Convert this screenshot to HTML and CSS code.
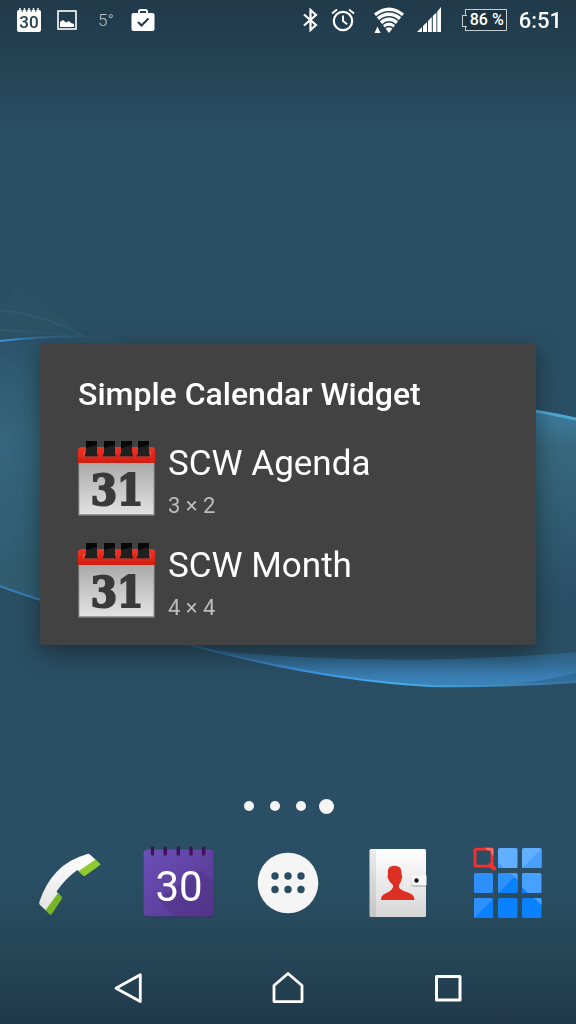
FILE: index.html
```html
<!DOCTYPE html>
<html lang="en">
<head>
    <meta charset="UTF-8">
    <meta name="viewport" content="width=device-width, initial-scale=1.0">
    <title>Simple Calendar Widget</title>
    <link rel="stylesheet" href="styles.css">
</head>
<body>

    <!-- Wallpaper -->
    <svg class="wallpaper" viewBox="0 0 576 1024" preserveAspectRatio="none" aria-hidden="true">
        <defs>
            <linearGradient id="sky" x1="0" y1="0" x2="0" y2="1">
                <stop offset="0" stop-color="#203a4a"/>
                <stop offset="0.04" stop-color="#233f50"/>
                <stop offset="0.13" stop-color="#2a4e63"/>
                <stop offset="0.85" stop-color="#2a4f64"/>
                <stop offset="0.93" stop-color="#264658"/>
                <stop offset="1" stop-color="#1f394a"/>
            </linearGradient>
            <linearGradient id="leftWave" x1="0" y1="0" x2="0" y2="1">
                <stop offset="0" stop-color="#2b5268"/>
                <stop offset="0.15" stop-color="#305d72"/>
                <stop offset="0.35" stop-color="#35657c"/>
                <stop offset="0.65" stop-color="#315f74"/>
                <stop offset="0.8" stop-color="#2f5b6d"/>
                <stop offset="1" stop-color="#2f668e"/>
            </linearGradient>
            <linearGradient id="rightWave" x1="0" y1="0" x2="0" y2="1">
                <stop offset="0" stop-color="#3d83a8"/>
                <stop offset="0.1" stop-color="#3b7896"/>
                <stop offset="0.2" stop-color="#38697e"/>
                <stop offset="0.45" stop-color="#315e73"/>
                <stop offset="0.8" stop-color="#2a4f66"/>
                <stop offset="1" stop-color="#2a4f64"/>
            </linearGradient>
            <linearGradient id="crescent" x1="0" y1="0" x2="0" y2="1">
                <stop offset="0" stop-color="#2b5878"/>
                <stop offset="0.4" stop-color="#31698f"/>
                <stop offset="0.8" stop-color="#3a7fb6"/>
                <stop offset="1" stop-color="#3b83ba"/>
            </linearGradient>
            <linearGradient id="edge" x1="0" y1="0" x2="1" y2="0">
                <stop offset="0" stop-color="#35719e" stop-opacity="0.5"/>
                <stop offset="0.3" stop-color="#3f93e5"/>
                <stop offset="0.55" stop-color="#46b1e8"/>
                <stop offset="0.75" stop-color="#3f90c4"/>
                <stop offset="1" stop-color="#3a75a0"/>
            </linearGradient>
            <linearGradient id="fade" x1="0" y1="0" x2="1" y2="0">
                <stop offset="0" stop-color="#4293dd"/>
                <stop offset="0.3" stop-color="#336e96"/>
                <stop offset="1" stop-color="#2a4f64" stop-opacity="0"/>
            </linearGradient>
        </defs>
        <rect width="576" height="1024" fill="url(#sky)"/>
        <path d="M16 286Q50 305 92 342L0 342V310Z" fill="#2e5768" opacity="0.4"/>
        <path d="M0 310Q50 315 92 341" fill="none" stroke="#356681" opacity="0.7"/>
        <path d="M0 330Q60 333 110 340" fill="none" stroke="#30607b" opacity="0.5" stroke-width="2"/>
        <path d="M0 341Q60 333 120 337L240 640Q110 628 0 585Z" fill="url(#leftWave)"/>
        <path d="M0 355Q22 372 40 398" fill="none" stroke="#3b6d82" opacity="0.5"/>
        <path d="M0 341Q50 335 120 337" fill="none" stroke="url(#fade)" stroke-width="2"/>
        <path d="M0 586Q20 594 60 606" fill="none" stroke="#3a7fb5" stroke-width="2"/>
        <path d="M400 395Q490 401 576 419V650H400Z" fill="url(#rightWave)"/>
        <path d="M500 406Q540 411 576 419" fill="none" stroke="#4fa7d6" stroke-width="3"/>
        <path d="M190 645Q222 653 300 657Q400 662 480 658Q530 656 576 652V682Q500 687 430 686Q320 680 190 645Z" fill="url(#crescent)"/>
        <path d="M515 684Q550 680 576 673V682Z" fill="#2d628b" opacity="0.6"/>
        <path d="M190 645Q320 680 430 686Q500 687 576 682" fill="none" stroke="url(#edge)" stroke-width="2"/>
    </svg>

    <!-- Status bar -->
    <header class="status-bar">
        <div class="notifications">
            <svg width="26" height="26" viewBox="0 0 26 26">
                <path d="M3 3h20a2 2 0 0 1 2 2v18a2 2 0 0 1-2 2H3a2 2 0 0 1-2-2V5a2 2 0 0 1 2-2z" fill="#fff"/>
                <path d="M4 1v3M8.500 1v3M13 1v3M17.500 1v3M22 1v3" stroke="#fff" stroke-width="1.500"/>
                <path d="M6.200 3v2M10.700 3v2M15.200 3v2M19.700 3v2" stroke="#24404f" stroke-width="1"/>
                <text class="mini-day" x="13" y="21" text-anchor="middle">30</text>
            </svg>
            <svg width="20" height="20" viewBox="0 0 20 20">
                <rect x="1" y="1" width="18" height="18" fill="none" stroke="#fff" stroke-width="1.600"/>
                <path d="M3 17v-5l3-2 3 2.500 3-1.500 2 2 3 1v3z" fill="#fff"/>
            </svg>
            <span class="temperature">5°</span>
            <svg width="24" height="24" viewBox="0 0 24 24">
                <path d="M8 6V3.500Q8 2 9.500 2h5Q16 2 16 3.500V6" fill="none" stroke="#fff" stroke-width="2"/>
                <rect x="0.500" y="5" width="23" height="18" rx="2" fill="#fff"/>
                <path d="M7 14l3.500 3.500 7-7" fill="none" stroke="#24404f" stroke-width="2.200"/>
            </svg>
        </div>
        <div class="system">
            <svg width="16" height="24" viewBox="0 0 16 24">
                <path d="M1 6.500L13 17 7.500 22V2l5.500 5L1 17.500" fill="none" stroke="#fff" stroke-width="2.200"/>
            </svg>
            <svg width="24" height="24" viewBox="0 0 24 24">
                <circle cx="12" cy="13" r="9.200" fill="none" stroke="#fff" stroke-width="2.200"/>
                <path d="M12 7.500V13l4.200 3.200M1 5.500l5-4M23 5.500l-5-4" fill="none" stroke="#fff" stroke-width="1.900"/>
            </svg>
            <svg class="wifi" width="32" height="28" viewBox="0 0 32 28">
                <path d="M1 7.500Q16-4.500 31 7.500L16 27z" fill="#fff"/>
                <g fill="none" stroke="#233f50" stroke-width="1.500">
                    <path d="M3 11Q16 0.500 29 11"/>
                    <path d="M6 15Q16 6.500 26 15"/>
                    <path d="M9 19Q16 12.500 23 19"/>
                    <path d="M11.500 22.500Q16 18.500 20.500 22.500"/>
                </g>
                <path d="M1.500 27L4.500 20.500 7.500 27z" fill="#fff"/>
            </svg>
            <svg width="24" height="26" viewBox="0 0 24 26">
                <path d="M0 25L5 20V25zM6 25V19L10 15V25zM11 25V14L14.800 10V25zM15.800 25V9L19.400 5.500V25zM20.300 25V4.500L24 0V25z" fill="#fff"/>
            </svg>
            <span class="battery">86 %</span>
            <time class="clock">6:51</time>
        </div>
    </header>

    <!-- Widget picker -->
    <main class="home">
        <section class="dialog" role="dialog" aria-labelledby="dialog-title">
            <h1 class="dialog-title" id="dialog-title">Simple Calendar Widget</h1>
            <ul class="widget-list">
                <li>
                    <button class="widget" type="button">
                        <svg width="78" height="76" viewBox="0 0 78 76">
                            <defs>
                                <linearGradient id="paper" x1="0" y1="0" x2="0" y2="1">
                                    <stop offset="0" stop-color="#aaa"/>
                                    <stop offset="1" stop-color="#e2e2e2"/>
                                </linearGradient>
                                <linearGradient id="red" x1="0" y1="0" x2="0" y2="1">
                                    <stop offset="0" stop-color="#f03325"/>
                                    <stop offset="1" stop-color="#cf1d10"/>
                                </linearGradient>
                            </defs>
                            <rect x="0.500" y="22" width="76" height="53.500" fill="#999"/>
                            <rect x="1.500" y="23" width="74" height="51" fill="url(#paper)"/>
                            <path d="M3 7H75L77 9V23H0V9Z" fill="url(#red)"/>
                            <path d="M5 17V12h15v5h5v-5h13v5h4v-5h12v5h5v-5h14v5H5z" fill="#f0493c"/>
                            <path d="M8 1h11v11l1 4.500H6L8 12zM26 1h11v11l1 4.500H24.500L26 12zM43 1h11v11l1 4.500H41.500L43 12zM60 1h11v11l1 4.500H58.500L60 12z" fill="#202020"/>
                            <path d="M8 1h11v4L8 8zM26 1h11v4l-11 3zM43 1h11v4L43 8zM60 1h11v4l-11 3z" fill="#080808"/>
                            <text class="widget-day" x="39" y="65" text-anchor="middle">31</text>
                        </svg>
                        <span class="widget-text">
                            <span class="widget-name">SCW Agenda</span>
                            <span class="widget-size">3 × 2</span>
                        </span>
                    </button>
                </li>
                <li>
                    <button class="widget" type="button">
                        <svg width="78" height="76" viewBox="0 0 78 76">
                            <rect x="0.500" y="22" width="76" height="53.500" fill="#999"/>
                            <rect x="1.500" y="23" width="74" height="51" fill="url(#paper)"/>
                            <path d="M3 7H75L77 9V23H0V9Z" fill="url(#red)"/>
                            <path d="M5 17V12h15v5h5v-5h13v5h4v-5h12v5h5v-5h14v5H5z" fill="#f0493c"/>
                            <path d="M8 1h11v11l1 4.500H6L8 12zM26 1h11v11l1 4.500H24.500L26 12zM43 1h11v11l1 4.500H41.500L43 12zM60 1h11v11l1 4.500H58.500L60 12z" fill="#202020"/>
                            <path d="M8 1h11v4L8 8zM26 1h11v4l-11 3zM43 1h11v4L43 8zM60 1h11v4l-11 3z" fill="#080808"/>
                            <text class="widget-day" x="39" y="65" text-anchor="middle">31</text>
                        </svg>
                        <span class="widget-text">
                            <span class="widget-name">SCW Month</span>
                            <span class="widget-size">4 × 4</span>
                        </span>
                    </button>
                </li>
            </ul>
        </section>
    </main>

    <div class="pages">
        <span class="page"></span>
        <span class="page"></span>
        <span class="page"></span>
        <span class="page current"></span>
    </div>

    <!-- Dock -->
    <div class="dock">
        <button class="app" type="button" aria-label="Phone">
            <svg width="72" height="72" viewBox="0 0 72 72">
                <defs>
                    <linearGradient id="handset" x1="0" y1="0" x2="0" y2="1">
                        <stop offset="0" stop-color="#fff"/>
                        <stop offset="1" stop-color="#e2e2e2"/>
                    </linearGradient>
                </defs>
                <path d="M52 8.500Q54.300 7 56 8.500L62.500 14.500 46 26 43.300 24Q31 33 22.500 45.500L25.500 49 12.500 65 6 59Q5 58 5.300 56Q18 18 52 8.500Z" fill="url(#handset)"/>
                <path d="M61.500 13.500l4.500 4q.8 1-.5 2L51.500 29.500q-1.500 1-2.500 0L44.300 25.300z" fill="#8fca2e"/>
                <path d="M24 47l3.500 3.500q1 1 .2 2.400L18 67.800q-1.200 1.800-2.600.4L11.500 64.200z" fill="#78b428"/>
            </svg>
        </button>
        <button class="app" type="button" aria-label="Calendar">
            <svg width="72" height="72" viewBox="0 0 72 72">
                <defs>
                    <linearGradient id="violet" x1="0" y1="0" x2="1" y2="1">
                        <stop offset="0" stop-color="#6b50b8"/>
                        <stop offset="1" stop-color="#54368c"/>
                    </linearGradient>
                </defs>
                <rect x="0.500" y="5" width="70" height="66.500" rx="4" fill="#1f3b4b"/>
                <rect x="0.500" y="3.500" width="70" height="67" rx="4" fill="url(#violet)"/>
                <path d="M15 53l17 17.500h36.500q2 0 2-2V36L58 25z" fill="#4f3285" opacity="0.5"/>
                <path d="M9.500 2v6M22.300 2v6M35.300 2v6M48 2v6M60.700 2v6" stroke="#3d1458" stroke-width="3.400" stroke-linecap="round"/>
                <text class="dock-day" x="36" y="55" text-anchor="middle">30</text>
            </svg>
        </button>
        <button class="app" type="button" aria-label="All apps">
            <svg width="72" height="72" viewBox="0 0 72 72">
                <circle cx="36" cy="37" r="30.300" fill="#f5f5f5"/>
                <g fill="#294c60">
                    <circle cx="23" cy="30" r="3.700"/>
                    <circle cx="36" cy="30" r="3.700"/>
                    <circle cx="49" cy="30" r="3.700"/>
                    <circle cx="23" cy="43.500" r="3.700"/>
                    <circle cx="36" cy="43.500" r="3.700"/>
                    <circle cx="49" cy="43.500" r="3.700"/>
                </g>
            </svg>
        </button>
        <button class="app" type="button" aria-label="Contacts">
            <svg width="72" height="72" viewBox="0 0 72 72">
                <defs>
                    <linearGradient id="book" x1="0" y1="0" x2="0" y2="1">
                        <stop offset="0" stop-color="#fff"/>
                        <stop offset="1" stop-color="#d6d6d6"/>
                    </linearGradient>
                </defs>
                <rect x="8.500" y="3" width="56.500" height="68" rx="1.500" fill="url(#book)"/>
                <path d="M10 3h5v68h-5q-1.500 0-1.500-1.500v-65Q8.500 3 10 3z" fill="#000" opacity="0.080"/>
                <path d="M33.500 19.700c5.500 0 7.500 3.600 7 8l.8 3.300-1.300 4.500-2 3.500v2.500c3 3.500 7.500 4.200 11 6 3.500 1.600 4.400 3.500 4.400 6.500H20c0-3 1-4.900 4.400-6.500 3.200-1.500 5.700-2.500 7.600-6V39l-3.500-3.500-2-4.500.5-3.300c-.7-4.400 1-8 6.500-8z" fill="#de2f24"/>
                <path d="M65 30.500H53q-2.500 0-2.500 2.500v5q0 2.500 2.500 2.500h12z" fill="#999"/>
                <path d="M65.500 29.500H53q-2.500 0-2.500 2.500v5q0 2.500 2.500 2.500h12.500z" fill="#f8f8f8"/>
                <circle cx="55.500" cy="34.500" r="2.200" fill="#111"/>
            </svg>
        </button>
        <button class="app" type="button" aria-label="Widgets">
            <svg width="72" height="72" viewBox="0 0 72 72">
                <g fill="#2e90ff">
                    <rect x="28" y="2" width="19.500" height="20" rx="1.500" fill="#62aeff"/>
                    <rect x="52" y="2" width="19.500" height="20" rx="1.500" fill="#62aeff"/>
                    <rect x="4" y="27" width="19" height="20" rx="1.500"/>
                    <rect x="28" y="27" width="19.500" height="20" rx="1.500"/>
                    <rect x="52" y="27" width="19.500" height="20" rx="1.500" fill="#48a0ff"/>
                    <rect x="4" y="52" width="19" height="20" rx="1.500"/>
                    <rect x="28" y="52" width="19.500" height="20" rx="1.500" fill="#0a82ff"/>
                    <rect x="52" y="52" width="19.500" height="20" rx="1.500" fill="#0a82ff"/>
                </g>
                <path d="M71.500 2.500V20.500q0 1.500-1.500 1.500H52.500zM28 16l6 6h-4.500q-1.500 0-1.500-1.500z" fill="#48a0ff"/>
                <path d="M47.500 28V45.500q0 1.500-1.500 1.500H28.500zM52 41l6 6h-4.500q-1.500 0-1.500-1.500zM23 53V70.500q0 1.500-1.500 1.500H4.500z" fill="#0a82ff"/>
                <path d="M40 27h6q1.500 0 1.500 1.500V34zM64 52h6q1.500 0 1.500 1.500V59z" fill="#48a0ff"/>
                <rect x="5" y="3.200" width="17" height="17" rx="1.500" fill="none" stroke="#fa2f2c" stroke-width="2.800"/>
                <path d="M15 1.800h6.500q2 0 2 2V10l-2.800-3V4.600h-3.200z" fill="#ff6a66"/>
                <path d="M20.500 19l3.500 3.500" stroke="#fa2f2c" stroke-width="4" stroke-linecap="round"/>
            </svg>
        </button>
    </div>

    <!-- Navigation keys -->
    <nav class="nav-bar">
        <button class="key" type="button" aria-label="Back">
            <svg width="36" height="36" viewBox="0 0 36 36">
                <path d="M30.300 4.800V31.500L6 18.200z" fill="none" stroke="#fff" stroke-width="2.800" stroke-linejoin="round"/>
            </svg>
        </button>
        <button class="key" type="button" aria-label="Home">
            <svg width="36" height="36" viewBox="0 0 36 36">
                <path d="M4 31.600V15.500L18 3.500 32 15.500V31.600z" fill="none" stroke="#fff" stroke-width="2.800" stroke-linejoin="round"/>
            </svg>
        </button>
        <button class="key" type="button" aria-label="Recent apps">
            <svg width="36" height="36" viewBox="0 0 36 36">
                <rect x="6.500" y="6.500" width="23.500" height="23.500" fill="none" stroke="#fff" stroke-width="3" stroke-linejoin="round"/>
            </svg>
        </button>
    </nav>

</body>
</html>
```

FILE: styles.css
```css
/* General Page Styling */
* {
    box-sizing: border-box;
}

body {
    margin: 0;
    min-height: 100vh;
    display: flex;
    flex-direction: column;
    background: #2a4f64;
    font-family: Roboto, sans-serif;
    color: #ffffff;
}

button {
    margin: 0;
    padding: 0;
    border: 0;
    background: none;
    color: inherit;
    font: inherit;
    text-align: left;
    cursor: pointer;
}

svg {
    display: block;
    flex: none;
}

.wallpaper {
    position: fixed;
    top: 0;
    left: 0;
    width: 100%;
    height: 100%;
    z-index: -1;
}

/* Status Bar */
.status-bar {
    display: flex;
    justify-content: space-between;
    align-items: center;
    height: 40px;
    padding: 0 14px 0 16px;
}

.notifications,
.system {
    display: flex;
    align-items: center;
}

.notifications { gap: 15px; }
.system { gap: 12px; }

.mini-day {
    font-size: 17px;
    font-weight: 500;
    fill: #24404f;
}

.temperature {
    width: 24px;
    padding-left: 6px;
    font-size: 17px;
    font-weight: 300;
    color: #b9c4cb;
}

.wifi { margin-left: 6px; }

.battery {
    position: relative;
    margin-left: 12px;
    padding: 0 2px 0 4px;
    border: 1px solid #c5ced3;
    background: #1d3340;
    font-size: 16px;
    line-height: 20px;
    font-weight: 500;
    white-space: nowrap;
}

/* Battery terminal */
.battery::before {
    content: "";
    position: absolute;
    left: -4px;
    top: 5px;
    width: 4px;
    height: 10px;
    border: 1px solid #c5ced3;
    border-right: 0;
    background: #1d3340;
}

.clock {
    font-size: 22px;
    font-weight: 500;
}

/* Widget Dialog */
.home {
    flex: 1;
    display: flex;
    align-items: center;
    padding: 150px 40px 0;
}

.dialog {
    width: 100%;
    padding: 32px 38px 14px;
    border-radius: 3px;
    background: #424242;
    box-shadow: 0 8px 24px rgba(0, 0, 0, 0.4);
}

.dialog-title {
    margin: 0 0 14px;
    font-size: 32px;
    line-height: 38px;
    font-weight: 500;
}

.widget-list {
    margin: 0;
    padding: 0;
    list-style: none;
}

.widget {
    display: flex;
    align-items: flex-start;
    gap: 12px;
    width: 100%;
    padding: 13px 0 6px;
}

.widget-day {
    font-family: "DejaVu Serif Condensed", "DejaVu Serif", serif;
    font-size: 42px;
    font-weight: 700;
    fill: #3a3a3a;
    stroke: #3a3a3a;
    stroke-width: 2px;
}

.widget-text {
    display: flex;
    flex-direction: column;
}

.widget-name {
    font-size: 35px;
    line-height: 48px;
}

.widget-size {
    font-size: 22px;
    line-height: 35px;
    color: #bdbdbd;
}

/* Page Indicator */
.pages {
    display: flex;
    justify-content: center;
    align-items: center;
    gap: 16px;
    height: 16px;
    padding-left: 2px;
}

.page {
    width: 10px;
    height: 10px;
    border-radius: 50%;
    background: #f5f5f5;
}

.page.current {
    width: 15px;
    height: 15px;
    margin-left: -3px;
}

/* Dock */
.dock {
    display: grid;
    grid-template-columns: repeat(5, 1fr);
    justify-items: center;
    padding: 32px 15px 34px;
}

.dock-day {
    font-size: 42px;
    fill: #ffffff;
}

/* Navigation Keys */
.nav-bar {
    display: flex;
    height: 72px;
    padding: 0 48px;
}

.key {
    flex: 1;
    display: flex;
    justify-content: center;
    align-items: center;
}
```
